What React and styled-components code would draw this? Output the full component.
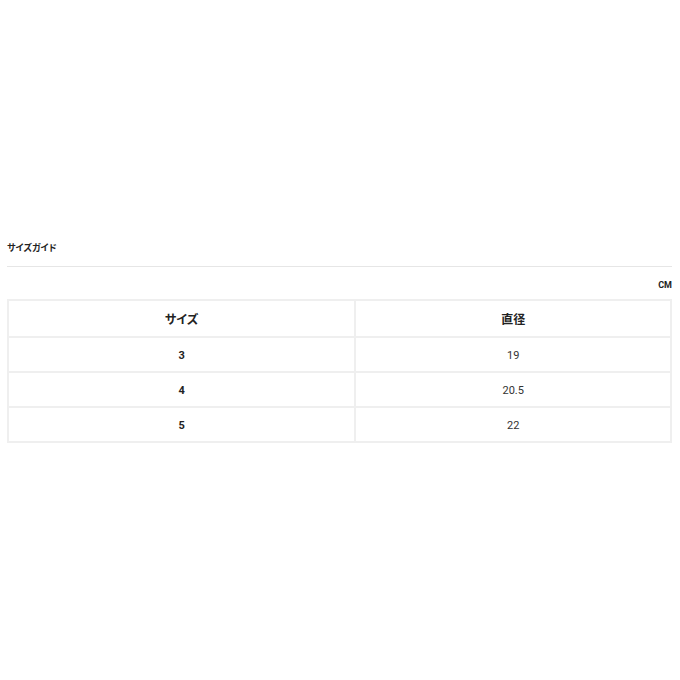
import React from 'react';
import styled, { createGlobalStyle } from 'styled-components';

const GlobalStyle = createGlobalStyle`
    html, body {
        margin: 0;
        padding: 0;
        background: #fff;
        font-family: Roboto, "Noto Sans CJK JP", sans-serif;
        font-feature-settings: "palt";
        color: #222;
    }
`;

const Page = styled.div`
    width: 680px;
    height: 680px;
    display: flex;
    flex-direction: column;
    padding: 241px 8px 0 7px;
    box-sizing: border-box;
`;

const Title = styled.div`
    font-size: 9px;
    font-weight: 700;
    line-height: 14px;
    padding: 0 0 11px 0;
    border-bottom: 1px solid #e6e6e6;
`;

const Unit = styled.div`
    text-align: right;
    font-size: 9px;
    font-weight: 700;
    line-height: 12px;
    margin: 12px 0 8px;
`;

const Table = styled.table`
    width: 100%;
    border-collapse: collapse;
    border: 2px solid #efefef;
`;

const HeadCell = styled.th`
    width: ${(p) => p.w};
    height: 35px;
    font-size: 12px;
    font-weight: 700;
    text-align: center;
    border: 2px solid #efefef;
    padding: 0;
`;

const Cell = styled.td`
    box-sizing: border-box;
    height: 35px;
    font-size: 11px;
    line-height: 14px;
    font-weight: ${(p) => (p.bold ? 700 : 400)};
    color: ${(p) => (p.bold ? '#222' : '#333')};
    text-align: center;
    border: 2px solid #efefef;
    padding: 3px 0 0;
`;

const rows = [
    ['3', '19'],
    ['4', '20.5'],
    ['5', '22'],
];

export default function App() {
    return (
        <>
            <GlobalStyle />
            <Page>
                <Title>サイズガイド</Title>
                <Unit>CM</Unit>
                <Table>
                    <thead>
                        <tr>
                            <HeadCell w="52.4%">サイズ</HeadCell>
                            <HeadCell w="47.6%">直径</HeadCell>
                        </tr>
                    </thead>
                    <tbody>
                        {rows.map(([size, dia]) => (
                            <tr key={size}>
                                <Cell bold>{size}</Cell>
                                <Cell>{dia}</Cell>
                            </tr>
                        ))}
                    </tbody>
                </Table>
            </Page>
        </>
    );
}
